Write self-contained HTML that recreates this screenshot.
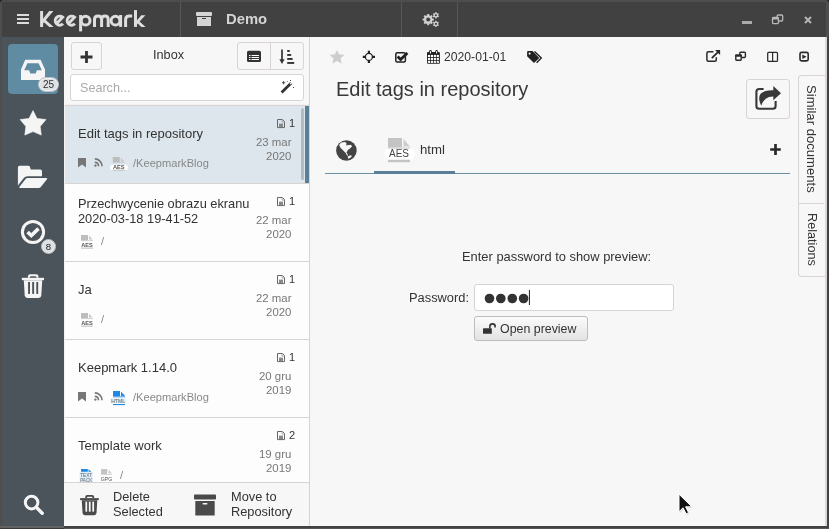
<!DOCTYPE html>
<html><head><meta charset="utf-8">
<style>
*{box-sizing:border-box;margin:0;padding:0}
*{-webkit-font-smoothing:antialiased}
html,body{width:829px;height:529px;overflow:hidden;background:#4d4d4d;font-family:"Liberation Sans",sans-serif;color:#333}
.a{position:absolute}
.t{position:absolute;white-space:nowrap;line-height:1;will-change:transform}
svg{position:absolute;display:block;will-change:transform}
</style></head><body>
<!-- window frame -->
<div class="a" style="left:0;top:0;width:829px;height:529px;background:#4e4e4e"></div>
<div class="a" style="left:827px;top:37px;width:2px;height:492px;background:#424242"></div>
<div class="a" style="left:0;top:526px;width:829px;height:2px;background:#424242"></div>
<div class="a" style="left:0;top:528px;width:829px;height:1px;background:#565656"></div>
<div class="a" style="left:0;top:526px;width:64px;height:2px;background:#626262"></div>
<div class="a" style="left:0;top:528px;width:64px;height:1px;background:#3a3a3a"></div>

<svg style="left:0;top:0" width="4" height="4" viewBox="0 0 4 4"><path d="M0 0H3.2Q0.6 0.6 0 3.2Z" fill="#262626"/></svg>
<svg style="left:825px;top:0" width="4" height="4" viewBox="825 0 4 4"><path d="M829 0H825.8Q828.4 0.6 829 3.2Z" fill="#262626"/></svg>
<!-- title bar -->
<div class="a" style="left:2px;top:2px;width:824px;height:35px;background:#414141"></div>
<div class="a" style="left:180px;top:2px;width:1px;height:35px;background:#585858"></div>
<div class="a" style="left:401px;top:2px;width:1px;height:35px;background:#585858"></div>
<div class="a" style="left:457px;top:2px;width:1px;height:35px;background:#585858"></div>
<!-- hamburger -->
<div class="a" style="left:17px;top:14px;width:12px;height:2px;background:#dcdcdc"></div>
<div class="a" style="left:17px;top:18px;width:12px;height:2px;background:#dcdcdc"></div>
<div class="a" style="left:17px;top:22px;width:12px;height:2px;background:#dcdcdc"></div>
<svg style="left:0;top:0" width="160" height="36" viewBox="0 0 160 36"><g fill="none" stroke="#dedede" stroke-width="3">
<path d="M41.6 11V27"/></g><g fill="#dedede"><path d="M43 18.8L49.2 11.1H53.4L43 23.4Z"/><path d="M45.2 19.6L53.6 27H49.3L43.4 21.8Z"/></g><g fill="none" stroke="#dedede" stroke-width="3">
<path d="M56 24.2L62.6 17.2A4.5 4.5 0 1 0 63 23.8"/>
<path d="M67.9 24.2L74.5 17.2A4.5 4.5 0 1 0 74.9 23.8"/>
<path d="M80.6 15V31.4"/><circle cx="85.6" cy="20.7" r="4.4"/>
<path d="M94.5 26.9V19.5Q94.5 16 98 16Q101.6 16 101.6 19.5V26.9M101.6 19.5Q101.6 16 105 16Q108.2 16 108.2 19.5V26.9"/>
<circle cx="115.5" cy="20.7" r="4.4"/><path d="M120.6 15V26.9"/>
<path d="M125.6 26.9V19.5Q125.6 16 129.5 16H132.2"/>
<path d="M135.5 10.1V26.9"/></g><g fill="#dedede"><path d="M137 20.2L141.3 15.2H145.4L137 24.2Z"/><path d="M138.8 20.8L145.5 27H141.3L137.2 23Z"/></g><g>
</g></svg>
<!-- archive icon -->
<div class="a" style="left:196px;top:12px;width:16px;height:4px;background:#d4d4d4;border-radius:1px"></div>
<div class="a" style="left:197px;top:17px;width:14px;height:9px;background:#d4d4d4"></div>
<div class="a" style="left:202px;top:18px;width:4px;height:1px;background:#414141"></div>
<div class="t" style="left:226px;top:12px;font-size:14.8px;font-weight:bold;color:#d4d4d4">Demo</div>
<!-- gears -->
<svg style="left:418px;top:8px" width="26" height="24" viewBox="418 8 26 24"><g fill="#d0d0d0"><circle cx="428.2" cy="19.6" r="4.4"/><rect x="427.20" y="14.00" width="2.0" height="11.20" transform="rotate(0.0 428.2 19.6)"/><rect x="427.20" y="14.00" width="2.0" height="11.20" transform="rotate(45.0 428.2 19.6)"/><rect x="427.20" y="14.00" width="2.0" height="11.20" transform="rotate(90.0 428.2 19.6)"/><rect x="427.20" y="14.00" width="2.0" height="11.20" transform="rotate(135.0 428.2 19.6)"/><circle cx="435.9" cy="15.3" r="2.4"/><rect x="435.25" y="12.10" width="1.3" height="6.40" transform="rotate(0.0 435.9 15.3)"/><rect x="435.25" y="12.10" width="1.3" height="6.40" transform="rotate(60.0 435.9 15.3)"/><rect x="435.25" y="12.10" width="1.3" height="6.40" transform="rotate(120.0 435.9 15.3)"/><circle cx="435.9" cy="23.9" r="2.4"/><rect x="435.25" y="20.70" width="1.3" height="6.40" transform="rotate(0.0 435.9 23.9)"/><rect x="435.25" y="20.70" width="1.3" height="6.40" transform="rotate(60.0 435.9 23.9)"/><rect x="435.25" y="20.70" width="1.3" height="6.40" transform="rotate(120.0 435.9 23.9)"/></g><g fill="#414141"><circle cx="428.2" cy="19.6" r="2"/><circle cx="435.9" cy="15.3" r="1.05"/><circle cx="435.9" cy="23.9" r="1.05"/></g></svg>
<!-- window controls -->
<div class="a" style="left:742px;top:21px;width:10px;height:3px;background:#aaa"></div>
<svg style="left:769px;top:12px" width="17" height="15" viewBox="769 12 17 15"><rect x="777.1" y="15" width="5.6" height="6" rx="1.2" fill="none" stroke="#b8b8b8" stroke-width="1.3"/><rect x="772.5" y="17.4" width="5.9" height="6.3" rx="1.2" fill="#414141" stroke="#b8b8b8" stroke-width="1.3"/><rect x="772" y="16.9" width="6.9" height="2.6" rx="1" fill="#b8b8b8"/></svg>
<svg style="left:804px;top:16px" width="8" height="8" viewBox="0 0 8 8"><path d="M1 1L7 7M7 1L1 7" stroke="#b4b4b4" stroke-width="2"/></svg>

<!-- sidebar -->
<div class="a" style="left:2px;top:37px;width:62px;height:489px;background:#4b545a"></div>
<div class="a" style="left:8px;top:44px;width:50px;height:50px;background:#5f8ba3;border-radius:4px"></div>
<svg style="left:0;top:0" width="70" height="100" viewBox="0 0 70 100"><path fill="#f5f5f5" fill-rule="evenodd" d="M25.2 59.8H40.6L45 69.6V80H21V69.6ZM27.4 63.3H38.6L41.8 70.2H36.9L35.7 73.5H30.3L29.1 70.2H24.2Z"/></svg>
<div class="a" style="left:38px;top:77px;width:21px;height:15px;border-radius:8px;background:#dde1e4;border:1px solid #b9bfc3;box-shadow:inset 0 0 0 1px #f0f2f3"></div>
<div class="t" style="left:38px;top:80px;font-size:10px;color:#333;width:21px;text-align:center">25</div>
<svg style="left:18px;top:108px" width="30" height="30" viewBox="18 108 30 30"><path fill="#f5f5f5" stroke="#f5f5f5" stroke-width="0.6" stroke-linejoin="round" d="M33 110.6L37 118.5L46 119.5L40.2 126.5L41.3 135.1L33 131.6L24.8 135.1L25.9 126.5L20.1 119.5L29 118.5Z"/></svg>
<svg style="left:16px;top:164px" width="34" height="26" viewBox="16 164 34 26"><path fill="#f5f5f5" d="M19.6 165.8H28.2Q29.6 165.8 30 167.1L30.7 169.6H40.3Q42 169.6 42 171.3V176.2H27.4Q25.2 176.2 24 177.8L17.9 185.6V167.5Q17.9 165.8 19.6 165.8Z"/><path fill="#f5f5f5" d="M27.6 178H46.3Q47.9 178 47 179.3L40.8 186.9Q40 188 38.6 188H20.2Q18.5 188 19.5 186.7L25.6 179Q26.4 178 27.6 178Z"/></svg>
<svg style="left:20px;top:219px" width="26" height="26" viewBox="0 0 26 26"><circle cx="13" cy="13" r="10.6" fill="none" stroke="#f5f5f5" stroke-width="3"/><path d="M7.6 13l3.7 3.6 7.2-7" fill="none" stroke="#f5f5f5" stroke-width="3.6" stroke-linejoin="miter"/></svg>
<div class="a" style="left:41px;top:239px;width:15px;height:15px;border-radius:8px;background:#dcdfe1;border:1px solid #b4b9bc;box-shadow:inset 0 0 0 1px #eceeef"></div>
<div class="t" style="left:41px;top:241.7px;font-size:9.6px;color:#222;width:15px;text-align:center">8</div>
<svg style="left:20px;top:272px" width="26" height="28" viewBox="20 272 26 28"><g fill="#f5f5f5"><rect x="21.8" y="277.8" width="22.2" height="2.4"/><path d="M27.9 277.8V276.6Q27.9 274.2 30.3 274.2H36.1Q38.5 274.2 38.5 276.6V277.8H36.4V277Q36.4 276.2 35.6 276.2H30.8Q30 276.2 30 277V277.8Z"/><path d="M23.8 280.2H42.2L41.3 295.6Q41.1 298 38.7 298H27.3Q24.9 298 24.7 295.6Z"/></g><g fill="#4b545a"><rect x="28.1" y="282" width="1.9" height="11.9"/><rect x="32.2" y="282" width="1.9" height="11.9"/><rect x="36.3" y="282" width="1.9" height="11.9"/></g></svg>
<svg style="left:23px;top:494px" width="21" height="21" viewBox="0 0 21 21"><circle cx="8.6" cy="8.6" r="6.3" fill="none" stroke="#f5f5f5" stroke-width="3"/><path d="M13.3 13.3L19.2 19.2" stroke="#f5f5f5" stroke-width="3.4" stroke-linecap="round"/></svg>

<!-- list panel -->
<div class="a" style="left:64px;top:37px;width:245px;height:489px;background:#f7f7f7"></div>
<div class="a" style="left:309px;top:37px;width:1px;height:489px;background:#d8d2d2"></div>

<!-- list header -->
<div class="a" style="left:71px;top:42px;width:31px;height:28px;border:1px solid #d9d3d3;border-radius:3px"></div>
<svg style="left:80px;top:51px" width="13" height="12" viewBox="0 0 13 12"><path d="M6.5 0V12M0.5 6H12.5" stroke="#333" stroke-width="2.8"/></svg>
<div class="t" style="left:153px;top:49px;font-size:12.7px;color:#333">Inbox</div>
<div class="a" style="left:237px;top:42px;width:67px;height:28px;border:1px solid #d9d3d3;border-radius:3px"></div>
<div class="a" style="left:270px;top:43px;width:1px;height:26px;background:#d9d3d3"></div>
<svg style="left:247px;top:50px" width="15" height="13" viewBox="0 0 15 13"><rect x="0" y="0.8" width="14" height="11.2" rx="1.6" fill="#333"/><g fill="#fff"><rect x="2" y="5" width="1.5" height="1"/><rect x="4.5" y="5" width="7.5" height="1"/><rect x="2" y="7" width="1.5" height="1"/><rect x="4.5" y="7" width="7.5" height="1"/><rect x="2" y="9" width="1.5" height="1"/><rect x="4.5" y="9" width="7.5" height="1"/></g></svg>
<svg style="left:279px;top:49px" width="16" height="16" viewBox="0 0 16 16"><path d="M3 0.6V12.5" stroke="#333" stroke-width="1.7"/><path d="M0.4 10.2L3 14.9L5.6 10.2Z" fill="#333"/><g fill="#333"><rect x="8.2" y="1" width="2.6" height="1.9"/><rect x="8.2" y="5" width="4" height="1.9"/><rect x="8.2" y="9" width="5.4" height="1.9"/><rect x="8.2" y="13" width="7" height="1.9"/></g></svg>
<div class="a" style="left:70px;top:74px;width:234px;height:27px;border:1px solid #d9d3d3;border-radius:3px;background:#fff"></div>
<div class="t" style="left:80px;top:82px;font-size:12.6px;color:#aaa">Search...</div>
<svg style="left:279px;top:79px" width="16" height="16" viewBox="0 0 16 16"><path d="M2.6 13.6L12.2 4" stroke="#333" stroke-width="2.8"/><path d="M11 5.2L13.2 3" stroke="#fff" stroke-width="1.2"/><g fill="#444"><rect x="4.2" y="2" width="0.9" height="3.4"/><rect x="2.9" y="3.3" width="3.4" height="0.9"/><rect x="11" y="1" width="1" height="1"/><rect x="14" y="8" width="1" height="1"/><rect x="8" y="2" width="0.8" height="0.8"/></g></svg>

<!-- list -->
<div class="a" style="left:64px;top:104px;width:245px;height:378px;background:#f2f2f2"></div>
<div class="a" style="left:65px;top:105px;width:244px;height:377px;background:#fdfdfd;border-top:1px solid #d9d3d3"></div>
<!-- LIST START -->
<div class="a" style="left:65px;top:106px;width:244px;height:77px;background:#dce6ec"></div>
<div class="a" style="left:305px;top:106px;width:4px;height:77px;background:#5b7f96"></div>
<div class="a" style="left:301px;top:108px;width:3px;height:72px;background:#b5bcc0;border-radius:2px"></div>
<div class="a" style="left:65px;top:183px;width:244px;height:1px;background:#d9d3d3"></div>
<div class="t" style="left:78px;top:126.6px;font-size:13px;color:#333">Edit tags in repository</div>
<svg style="left:78px;top:158px" width="8" height="10" viewBox="0 0 8 10"><path d="M0 0H8V9.6L4 6.4L0 9.6Z" fill="#777"/></svg>
<svg style="left:94px;top:158px" width="9" height="9" viewBox="0 0 9 9"><g fill="none" stroke="#777" stroke-width="1.6"><path d="M0.8 4.4A4 4 0 0 1 4.6 8.2"/><path d="M0.8 0.9A7.4 7.4 0 0 1 8.1 8.2"/></g><circle cx="1.4" cy="7.6" r="1.2" fill="#777"/></svg>
<svg style="left:110.2px;top:157px" width="19" height="14" viewBox="0 0 19 14"><rect x="0" y="7.8" width="18" height="5.2" rx="2.6" fill="#fff"/><g transform="translate(2.8 0)"><rect x="0" y="0" width="7" height="5.3" fill="#bdbdbd"/><path d="M8 0.6L11.5 4.6H8Z" fill="#c8c8c8"/><rect x="0" y="5.3" width="12" height="0.8" fill="#c8c8c8"/><text x="6" y="11.6" font-family="Liberation Sans" font-size="5.6" font-weight="bold" text-anchor="middle" fill="#555">AES</text><rect x="0" y="12.6" width="12" height="1" fill="#bbb"/></g></svg>
<div class="t" style="left:133px;top:157.5px;font-size:11.1px;color:#888">/KeepmarkBlog</div>
<svg style="left:277px;top:119px" width="9" height="10" viewBox="0 0 9 10"><path d="M0.5 0.5H5.5L7.5 2.5V8.6H0.5Z" fill="none" stroke="#666" stroke-width="1"/><rect x="2" y="4.6" width="4" height="3.4" fill="#888"/><path d="M5 0.5V3H7.5" fill="none" stroke="#999" stroke-width="0.8"/></svg>
<div class="t" style="left:289px;top:118px;font-size:11px;color:#333">1</div>
<div class="t" style="right:538px;top:135.2px;font-size:11.4px;line-height:14px;color:#777;text-align:right">23 mar<br>2020</div>
<div class="a" style="left:65px;top:261px;width:244px;height:1px;background:#d9d3d3"></div>
<div class="t" style="left:78px;top:196.3px;font-size:12.8px;line-height:15px;color:#333">Przechwycenie obrazu ekranu<br>2020-03-18 19-41-52</div>
<svg style="left:81.0px;top:235px" width="19" height="14" viewBox="0 0 19 14"><g transform="translate(0 0)"><rect x="0" y="0" width="7" height="5.3" fill="#bdbdbd"/><path d="M8 0.6L11.5 4.6H8Z" fill="#c8c8c8"/><rect x="0" y="5.3" width="12" height="0.8" fill="#c8c8c8"/><text x="6" y="11.6" font-family="Liberation Sans" font-size="5.6" font-weight="bold" text-anchor="middle" fill="#555">AES</text><rect x="0" y="12.6" width="12" height="1" fill="#bbb"/></g></svg>
<div class="t" style="left:101px;top:235.5px;font-size:11.1px;color:#888">/</div>
<svg style="left:277px;top:197px" width="9" height="10" viewBox="0 0 9 10"><path d="M0.5 0.5H5.5L7.5 2.5V8.6H0.5Z" fill="none" stroke="#666" stroke-width="1"/><rect x="2" y="4.6" width="4" height="3.4" fill="#888"/><path d="M5 0.5V3H7.5" fill="none" stroke="#999" stroke-width="0.8"/></svg>
<div class="t" style="left:289px;top:196px;font-size:11px;color:#333">1</div>
<div class="t" style="right:538px;top:213.2px;font-size:11.4px;line-height:14px;color:#777;text-align:right">22 mar<br>2020</div>
<div class="a" style="left:65px;top:339px;width:244px;height:1px;background:#d9d3d3"></div>
<div class="t" style="left:78px;top:282.6px;font-size:13px;color:#333">Ja</div>
<svg style="left:81.0px;top:313px" width="19" height="14" viewBox="0 0 19 14"><g transform="translate(0 0)"><rect x="0" y="0" width="7" height="5.3" fill="#bdbdbd"/><path d="M8 0.6L11.5 4.6H8Z" fill="#c8c8c8"/><rect x="0" y="5.3" width="12" height="0.8" fill="#c8c8c8"/><text x="6" y="11.6" font-family="Liberation Sans" font-size="5.6" font-weight="bold" text-anchor="middle" fill="#555">AES</text><rect x="0" y="12.6" width="12" height="1" fill="#bbb"/></g></svg>
<div class="t" style="left:101px;top:313.5px;font-size:11.1px;color:#888">/</div>
<svg style="left:277px;top:275px" width="9" height="10" viewBox="0 0 9 10"><path d="M0.5 0.5H5.5L7.5 2.5V8.6H0.5Z" fill="none" stroke="#666" stroke-width="1"/><rect x="2" y="4.6" width="4" height="3.4" fill="#888"/><path d="M5 0.5V3H7.5" fill="none" stroke="#999" stroke-width="0.8"/></svg>
<div class="t" style="left:289px;top:274px;font-size:11px;color:#333">1</div>
<div class="t" style="right:538px;top:291.2px;font-size:11.4px;line-height:14px;color:#777;text-align:right">22 mar<br>2020</div>
<div class="a" style="left:65px;top:417px;width:244px;height:1px;background:#d9d3d3"></div>
<div class="t" style="left:78px;top:360.6px;font-size:13px;color:#333">Keepmark 1.14.0</div>
<svg style="left:78px;top:392px" width="8" height="10" viewBox="0 0 8 10"><path d="M0 0H8V9.6L4 6.4L0 9.6Z" fill="#777"/></svg>
<svg style="left:94px;top:392px" width="9" height="9" viewBox="0 0 9 9"><g fill="none" stroke="#777" stroke-width="1.6"><path d="M0.8 4.4A4 4 0 0 1 4.6 8.2"/><path d="M0.8 0.9A7.4 7.4 0 0 1 8.1 8.2"/></g><circle cx="1.4" cy="7.6" r="1.2" fill="#777"/></svg>
<svg style="left:110px;top:391px" width="17" height="16" viewBox="0 0 17 16"><rect x="0.8" y="7.6" width="14.8" height="4.6" fill="#d6eafa"/><rect x="3" y="0" width="7" height="5.2" fill="#1e88e5"/><path d="M11 0.5L15 5H11Z" fill="#1e88e5"/><rect x="3" y="5.4" width="12" height="0.9" fill="#1e88e5"/><text x="8.2" y="11.9" font-family="Liberation Sans" font-size="5.6" text-anchor="middle" fill="#666" textLength="14" lengthAdjust="spacingAndGlyphs">HTML</text><rect x="3" y="13" width="12" height="1.1" fill="#1e88e5"/></svg>
<div class="t" style="left:133px;top:391.5px;font-size:11.1px;color:#888">/KeepmarkBlog</div>
<svg style="left:277px;top:353px" width="9" height="10" viewBox="0 0 9 10"><path d="M0.5 0.5H5.5L7.5 2.5V8.6H0.5Z" fill="none" stroke="#666" stroke-width="1"/><rect x="2" y="4.6" width="4" height="3.4" fill="#888"/><path d="M5 0.5V3H7.5" fill="none" stroke="#999" stroke-width="0.8"/></svg>
<div class="t" style="left:289px;top:352px;font-size:11px;color:#333">1</div>
<div class="t" style="right:538px;top:369.2px;font-size:11.4px;line-height:14px;color:#777;text-align:right">20 gru<br>2019</div>
<div class="t" style="left:78px;top:438.6px;font-size:13px;color:#333">Template work</div>
<svg style="left:79px;top:469px" width="15" height="13" viewBox="0 0 15 13"><rect x="0.6" y="3" width="13.2" height="10" fill="#dcedfa"/><rect x="2" y="0" width="6.8" height="2.8" fill="#1e88e5"/><path d="M9.5 0.2L12.5 2.8H9.5Z" fill="#1e88e5"/><text x="7.2" y="7.6" font-family="Liberation Sans" font-size="5.4" text-anchor="middle" fill="#666" textLength="12" lengthAdjust="spacingAndGlyphs">TEXT</text><text x="7.2" y="12.8" font-family="Liberation Sans" font-size="5.4" text-anchor="middle" fill="#666" textLength="12" lengthAdjust="spacingAndGlyphs">PACK</text></svg>
<svg style="left:99.5px;top:469px" width="14" height="15" viewBox="0 0 14 15"><rect x="1" y="0" width="6.2" height="5" fill="#c4c4c4"/><path d="M8.5 0.4L12 4.6H8.5Z" fill="#cfcfcf"/><rect x="1" y="5.2" width="11" height="0.8" fill="#cfcfcf"/><text x="6.5" y="12.4" font-family="Liberation Sans" font-size="5.6" text-anchor="middle" fill="#555" textLength="11.5" lengthAdjust="spacingAndGlyphs">GPG</text></svg>
<div class="t" style="left:120px;top:469.5px;font-size:11.1px;color:#888">/</div>
<svg style="left:277px;top:431px" width="9" height="10" viewBox="0 0 9 10"><path d="M0.5 0.5H5.5L7.5 2.5V8.6H0.5Z" fill="none" stroke="#666" stroke-width="1"/><rect x="2" y="4.6" width="4" height="3.4" fill="#888"/><path d="M5 0.5V3H7.5" fill="none" stroke="#999" stroke-width="0.8"/></svg>
<div class="t" style="left:289px;top:430px;font-size:11px;color:#333">2</div>
<div class="t" style="right:538px;top:447.2px;font-size:11.4px;line-height:14px;color:#777;text-align:right">19 gru<br>2019</div>
<!-- LIST END -->

<!-- bottom bar -->
<div class="a" style="left:64px;top:482px;width:245px;height:1px;background:#d9d3d3"></div>
<svg style="left:78px;top:493px" width="24" height="25" viewBox="78 493 24 25"><g transform="translate(80.1 495.1) scale(0.842) translate(-21.8 -274.2)"><g fill="#4a4a4a"><rect x="21.8" y="277.8" width="22.2" height="2.4"/><path d="M27.9 277.8V276.6Q27.9 274.2 30.3 274.2H36.1Q38.5 274.2 38.5 276.6V277.8H36.4V277Q36.4 276.2 35.6 276.2H30.8Q30 276.2 30 277V277.8Z"/><path d="M23.8 280.2H42.2L41.3 295.6Q41.1 298 38.7 298H27.3Q24.9 298 24.7 295.6Z"/></g><g fill="#f7f7f7"><rect x="28.1" y="282" width="2.1" height="11.9"/><rect x="32.2" y="282" width="2.1" height="11.9"/><rect x="36.3" y="282" width="2.1" height="11.9"/></g></g></svg>
<div class="t" style="left:113px;top:488.8px;font-size:12.8px;line-height:15px;color:#333">Delete<br>Selected</div>
<svg style="left:194px;top:494px" width="22" height="22" viewBox="0 0 22 22"><rect x="0" y="0.5" width="22" height="5" rx="0.8" fill="#4a4a4a"/><rect x="1.3" y="7" width="19.4" height="14.5" fill="#4a4a4a"/><rect x="8.5" y="9" width="5" height="1.6" rx="0.8" fill="#f7f7f7"/></svg>
<div class="t" style="left:231px;top:488.8px;font-size:12.8px;line-height:15px;color:#333">Move to<br>Repository</div>

<!-- main panel -->
<div class="a" style="left:310px;top:37px;width:517px;height:489px;background:#f7f7f7"></div>
<div class="a" style="left:825px;top:37px;width:2px;height:489px;background:#dcd6d6"></div>

<!-- main toolbar -->
<svg style="left:330px;top:50px" width="14" height="14" viewBox="0 0 27 26"><polygon fill="#cdcdcd" stroke="#cdcdcd" stroke-width="1.5" stroke-linejoin="round" points="13.00,1.00 16.64,8.68 26.03,9.47 18.90,15.62 21.05,24.78 13.00,19.90 4.95,24.78 7.10,15.62 -0.03,9.47 9.36,8.68" transform="translate(0.5 0)"/></svg>
<svg style="left:362px;top:50px" width="14" height="14" viewBox="362 50 14 14"><circle cx="368.9" cy="56.9" r="3.5" fill="none" stroke="#222" stroke-width="1.3"/><path d="M368.9 50.8V53.6M368.9 60.2V63M362.8 56.9H365.6M372.2 56.9H375" stroke="#222" stroke-width="2.2"/></svg>
<svg style="left:394px;top:51px" width="15" height="13" viewBox="394 51 15 13"><rect x="395.8" y="52.8" width="9.6" height="9.2" rx="1.5" fill="none" stroke="#222" stroke-width="1.5"/><path d="M397.6 56.6L400.6 59.6L407.4 53" fill="none" stroke="#222" stroke-width="2.8"/></svg>
<svg style="left:426px;top:49px" width="15" height="16" viewBox="426 49 15 16"><rect x="427" y="52" width="12.9" height="11.7" rx="1" fill="#222"/><g fill="#fff"><rect x="427.9" y="54.9" width="2.15" height="2.1"/><rect x="427.9" y="57.85" width="2.15" height="2.1"/><rect x="427.9" y="60.8" width="2.15" height="2.1"/><rect x="430.85" y="54.9" width="2.15" height="2.1"/><rect x="430.85" y="57.85" width="2.15" height="2.1"/><rect x="430.85" y="60.8" width="2.15" height="2.1"/><rect x="433.8" y="54.9" width="2.15" height="2.1"/><rect x="433.8" y="57.85" width="2.15" height="2.1"/><rect x="433.8" y="60.8" width="2.15" height="2.1"/><rect x="436.75" y="54.9" width="2.15" height="2.1"/><rect x="436.75" y="57.85" width="2.15" height="2.1"/><rect x="436.75" y="60.8" width="2.15" height="2.1"/></g><rect x="429.2" y="50" width="2.6" height="4.4" rx="1.3" fill="#222"/><rect x="435.3" y="50" width="2.6" height="4.4" rx="1.3" fill="#222"/><rect x="430" y="51" width="1" height="2.6" rx="0.5" fill="#fff"/><rect x="436.1" y="51" width="1" height="2.6" rx="0.5" fill="#fff"/></svg>
<div class="t" style="left:444px;top:50.5px;font-size:12.2px;color:#333">2020-01-01</div>
<svg style="left:524px;top:48px" width="22" height="18" viewBox="524 48 22 18"><path d="M527.1 52.1Q527.1 51.1 528.1 51.1H532.6L538.8 57.5Q539.3 58 538.8 58.5L534.5 62.6Q534 63.1 533.5 62.6L527.1 56.3Z" fill="#222"/><circle cx="529.6" cy="53.6" r="1.05" fill="#f7f7f7"/><path d="M534.5 51.4L541.3 58.1L536.6 62.8" fill="none" stroke="#222" stroke-width="1.4"/></svg>
<svg style="left:704px;top:48px" width="18" height="16" viewBox="704 48 18 16"><path d="M713.4 51.7H708.4Q706.9 51.7 706.9 53.2V59.8Q706.9 61.3 708.4 61.3H714.8Q716.3 61.3 716.3 59.8V57.2" fill="none" stroke="#2a2a2a" stroke-width="1.5"/><path d="M715 50H720.1V55.1Z" fill="#2a2a2a"/><path d="M718.7 51.4L711.8 58.2" stroke="#2a2a2a" stroke-width="1.8"/></svg>
<svg style="left:733px;top:50px" width="15" height="12" viewBox="733 50 15 12"><rect x="739.8" y="52.2" width="5.6" height="5.3" rx="0.9" fill="none" stroke="#2a2a2a" stroke-width="1.4"/><rect x="735.8" y="55.1" width="5.4" height="5.1" rx="0.6" fill="#f7f7f7" stroke="#2a2a2a" stroke-width="1.4"/><rect x="735.1" y="54.4" width="6.8" height="2.3" rx="0.6" fill="#2a2a2a"/></svg>
<svg style="left:765px;top:50px" width="15" height="13" viewBox="765 50 15 13"><rect x="767.7" y="52.4" width="9.8" height="8.9" rx="0.9" fill="none" stroke="#2a2a2a" stroke-width="1.25"/><path d="M772.6 52.4V61.3" stroke="#2a2a2a" stroke-width="1.2"/></svg>
<svg style="left:797px;top:50px" width="14" height="13" viewBox="797 50 14 13"><rect x="800" y="52.4" width="8.2" height="8.5" rx="1.6" fill="none" stroke="#2a2a2a" stroke-width="1.6"/><path d="M802.3 54.5L806.5 56.7L802.3 58.9Z" fill="#2a2a2a"/></svg>

<div class="t" style="left:336px;top:79px;font-size:20px;color:#383838">Edit tags in repository</div>
<div class="a" style="left:746px;top:79px;width:44px;height:40px;border:1px solid #d9d3d3;border-radius:3px"></div>
<svg style="left:750px;top:82px" width="36" height="32" viewBox="750 82 36 32"><path d="M763.6 89H759.2Q756.4 89 756.4 91.8V106Q756.4 108.8 759.2 108.8H772.8Q775.6 108.8 775.6 106V101" fill="none" stroke="#383838" stroke-width="2.1"/><path d="M773.3 86.1L781 93.2L773.3 100.2V96.6Q764.5 96.4 761.2 105.8Q757.4 97.8 760.8 93.6Q764.5 90 773.3 90.2Z" fill="#383838"/></svg>

<!-- side tabs -->
<div class="a" style="left:798px;top:75px;width:27px;height:202px;border:1px solid #d9d3d3;border-right:none;border-radius:4px 0 0 4px;background:#f7f7f7"></div>
<div class="a" style="left:798px;top:203px;width:26px;height:1px;background:#d9d3d3"></div>
<div class="t" style="left:805px;top:84.5px;font-size:13.1px;color:#333;transform-origin:0 0;transform:translate(13px,0) rotate(90deg)">Similar documents</div>
<div class="t" style="left:805px;top:213px;font-size:12.7px;color:#333;transform-origin:0 0;transform:translate(13px,0) rotate(90deg)">Relations</div>

<!-- tabs -->
<svg style="left:333px;top:137px" width="28" height="26" viewBox="333 137 28 26"><circle cx="346.4" cy="150.5" r="10.3" fill="#444"/><path fill="#f7f7f7" d="M339.1 145.1L341.1 142.6L345.3 142.1L346.4 143.6L347.9 145.3L350.7 144.7L352.1 146.3L350 148.6L347.8 150.1L347.2 151.6L345.6 152.9L343 150.3L340.6 147.9Z"/><path d="M346.1 152.6L347.6 155.4" stroke="#f7f7f7" stroke-width="1.1"/><circle cx="346.9" cy="144.7" r="0.8" fill="#444"/><path fill="#f7f7f7" d="M347.8 156.4L350.2 155.2L352.2 156L350 157.9L348 158.8Z"/></svg>
<svg style="left:384px;top:138px" width="31" height="25" viewBox="0 0 31 25"><rect x="0" y="10.5" width="31" height="11" rx="5.5" fill="#fff"/><rect x="4" y="0" width="14" height="9.5" fill="#c4c4c4"/><path d="M19.5 1L26 8.5H19.5Z" fill="#cdcdcd"/><rect x="4" y="9.5" width="22" height="1.2" fill="#d0d0d0"/><text x="15" y="19.3" font-family="Liberation Sans" font-size="10" text-anchor="middle" fill="#444">AES</text><rect x="4" y="21.8" width="22" height="2.4" fill="#c4c4c4"/></svg>
<div class="t" style="left:419.5px;top:143px;font-size:13.2px;color:#333">html</div>
<svg style="left:768px;top:142px" width="15" height="15" viewBox="768 142 15 15"><path d="M775.5 144V155M770.2 149.5H780.8" stroke="#2a2a2a" stroke-width="2.7"/></svg>
<div class="a" style="left:325px;top:173px;width:465px;height:1px;background:#6b8fa5"></div>
<div class="a" style="left:374px;top:171px;width:81px;height:3px;background:#5b7f96"></div>

<!-- password form -->
<div class="t" style="left:462px;top:250.5px;font-size:12.9px;color:#333">Enter password to show preview:</div>
<div class="t" style="left:408.5px;top:291.5px;font-size:12.85px;color:#333">Password:</div>
<div class="a" style="left:474px;top:284px;width:200px;height:27px;border:1px solid #d9d3d3;border-radius:3px;background:#fff"></div>
<svg style="left:478px;top:286px" width="60" height="24" viewBox="478 286 60 24"><g fill="#333"><circle cx="489.5" cy="298.5" r="4.8"/><circle cx="500.8" cy="298.5" r="4.8"/><circle cx="512.3" cy="298.5" r="4.8"/><circle cx="523.6" cy="298.5" r="4.8"/></g><rect x="528.9" y="290" width="1.1" height="15" fill="#333"/></svg>
<div class="a" style="left:474px;top:316px;width:114px;height:25px;border:1px solid #bdbdbd;border-radius:3px;background:linear-gradient(#fbfbfb,#e3e3e3)"></div>
<svg style="left:480px;top:320px" width="20" height="16" viewBox="480 320 20 16"><rect x="483" y="328.3" width="8.8" height="5.5" rx="0.4" fill="#333"/><path d="M489.9 328.5V326.3Q489.9 323.9 492.6 323.9Q495.1 323.9 495.1 326.3V327.6" fill="none" stroke="#333" stroke-width="1.6"/></svg>
<div class="t" style="left:500px;top:322.5px;font-size:12.4px;color:#333">Open preview</div>

<!-- mouse cursor -->
<svg style="left:675px;top:490px" width="22" height="28" viewBox="675 490 22 28"><path d="M679.8 495.2V513L683.8 509L687 515L689.4 513.8L686.4 508H692.6Z" fill="#000" opacity="0.12"/><path d="M679 494.2V511.8L683 507.8L686.2 513.8L688.6 512.6L685.6 506.8H691.8Z" fill="#111" stroke="#fff" stroke-width="1" stroke-linejoin="miter"/></svg>

</body></html>
